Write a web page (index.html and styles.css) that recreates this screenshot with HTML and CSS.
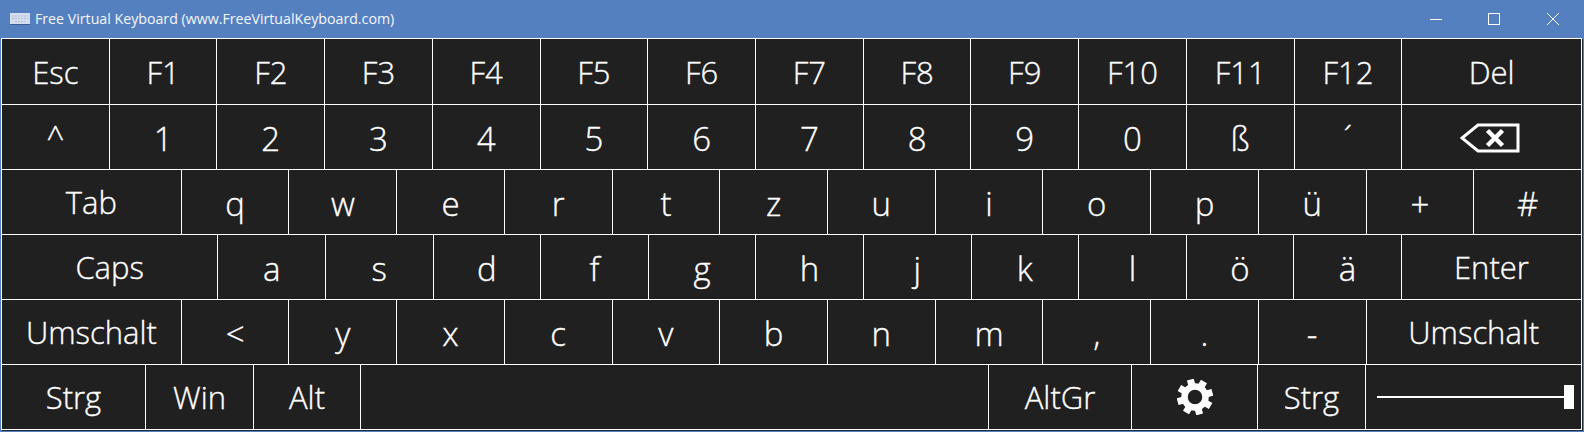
FILE: index.html
```html
<!DOCTYPE html>
<html lang="de">
<head>
<meta charset="utf-8">
<title>Free Virtual Keyboard</title>
<link rel="stylesheet" href="styles.css">
</head>
<body>
<div class="window">
  <header class="titlebar">
    <svg class="app-icon" width="20" height="12" viewBox="0 0 20 12"><rect x="0" y="0" width="20" height="11" fill="#d5deee"/><rect x="0" y="11" width="20" height="1" fill="#3f5f92"/><path d="M2 3h16M2 5.500h16M5 8.500h10" stroke="#aebcd6" stroke-width="1" stroke-dasharray="2 1"/></svg>
    <span class="title">Free Virtual Keyboard (www.FreeVirtualKeyboard.com)</span>
    <div class="controls">
      <div class="ctl"><svg width="14" height="14" viewBox="0 0 14 14"><path d="M1 7.500h12" stroke="#fff" stroke-width="1"/></svg></div>
      <div class="ctl"><svg width="14" height="14" viewBox="0 0 14 14"><rect x="1.500" y="1.500" width="11" height="11" fill="none" stroke="#fff" stroke-width="1"/></svg></div>
      <div class="ctl"><svg width="14" height="14" viewBox="0 0 14 14"><path d="M1 1l12 12M13 1L1 13" stroke="#fff" stroke-width="1"/></svg></div>
    </div>
  </header>
  <main class="keyboard">
    <div class="row r1 fn">
      <div class="key">Esc</div><div class="key">F1</div><div class="key">F2</div><div class="key">F3</div><div class="key">F4</div><div class="key">F5</div><div class="key">F6</div><div class="key">F7</div><div class="key">F8</div><div class="key">F9</div><div class="key">F10</div><div class="key">F11</div><div class="key">F12</div><div class="key">Del</div>
    </div>
    <div class="row r1">
      <div class="key">^</div><div class="key big">1</div><div class="key big">2</div><div class="key big">3</div><div class="key big">4</div><div class="key big">5</div><div class="key big">6</div><div class="key big">7</div><div class="key big">8</div><div class="key big">9</div><div class="key big">0</div><div class="key big">ß</div><div class="key">´</div>
      <div class="key"><svg class="bksp" width="60" height="30" viewBox="0 0 60 30"><path d="M18 2H58V28H18L2 15Z" fill="none" stroke="#fff" stroke-width="3"/><path d="M27.500 7.500L42.500 22.500M42.500 7.500L27.500 22.500" stroke="#fff" stroke-width="4.500"/></svg></div>
    </div>
    <div class="row r3">
      <div class="key">Tab</div><div class="key big">q</div><div class="key big">w</div><div class="key big">e</div><div class="key big">r</div><div class="key big">t</div><div class="key big">z</div><div class="key big">u</div><div class="key big">i</div><div class="key big">o</div><div class="key big">p</div><div class="key big">ü</div><div class="key big">+</div><div class="key big">#</div>
    </div>
    <div class="row r4">
      <div class="key">Caps</div><div class="key big">a</div><div class="key big">s</div><div class="key big">d</div><div class="key big">f</div><div class="key big">g</div><div class="key big">h</div><div class="key big">j</div><div class="key big">k</div><div class="key big">l</div><div class="key big">ö</div><div class="key big">ä</div><div class="key">Enter</div>
    </div>
    <div class="row r5">
      <div class="key">Umschalt</div><div class="key big">&lt;</div><div class="key big">y</div><div class="key big">x</div><div class="key big">c</div><div class="key big">v</div><div class="key big">b</div><div class="key big">n</div><div class="key big">m</div><div class="key big">,</div><div class="key big">.</div><div class="key big">-</div><div class="key">Umschalt</div>
    </div>
    <div class="row r6">
      <div class="key">Strg</div><div class="key">Win</div><div class="key">Alt</div><div class="key"></div><div class="key">AltGr</div>
      <div class="key"><svg width="36" height="36" viewBox="-18 -18 36 36"><circle r="10.500" fill="none" stroke="#fff" stroke-width="6.500"/><g fill="#fff" transform="rotate(-15)"><rect x="-3.500" y="-18" width="7" height="6"/><rect x="-3.500" y="-18" width="7" height="6" transform="rotate(45)"/><rect x="-3.500" y="-18" width="7" height="6" transform="rotate(90)"/><rect x="-3.500" y="-18" width="7" height="6" transform="rotate(135)"/><rect x="-3.500" y="-18" width="7" height="6" transform="rotate(180)"/><rect x="-3.500" y="-18" width="7" height="6" transform="rotate(225)"/><rect x="-3.500" y="-18" width="7" height="6" transform="rotate(270)"/><rect x="-3.500" y="-18" width="7" height="6" transform="rotate(315)"/></g></svg></div>
      <div class="key">Strg</div>
      <div class="key slider"><div class="track"></div><div class="thumb"></div></div>
    </div>
  </main>
</div>
</body>
</html>
```
FILE: styles.css
```css
* { box-sizing: border-box; }
html, body { margin: 0; padding: 0; }
body { width: 1584px; height: 432px; overflow: hidden; background: #5580c0; font-family: "Open Sans", "Noto Sans", sans-serif; }
.window { display: flex; flex-direction: column; height: 432px; }
.titlebar { height: 38px; flex: none; display: flex; align-items: center; padding-left: 10px; background: #5580c0; color: #f4f6fa; }
.app-icon { flex: none; margin-right: 5px; }
.title { font-size: 14.200px; line-height: 38px; }
.controls { margin-left: auto; display: flex; padding-right: 2px; }
.ctl { width: 58.500px; height: 38px; display: flex; align-items: center; justify-content: center; }
.keyboard { margin: 0 2px 2px 1px; display: grid; grid-template-rows: 65px repeat(5, 64px); gap: 1px; padding: 1px; background: #fff; box-shadow: 1px 1px 0 #1f2a3a; }
.row { display: grid; gap: 1px; min-height: 0; }
.r1 { grid-template-columns: repeat(13, 1fr) 1.675fr; }
.r3 { grid-template-columns: 1.675fr repeat(13, 1fr); }
.r4 { grid-template-columns: 2.02fr repeat(11, 1fr) 1.68fr; }
.r5 { grid-template-columns: 1.675fr repeat(11, 1fr) 2.01fr; }
.r6 { grid-template-columns: 143px 107px 106px 627px 142px 125px 107px 1fr; }
.key { display: flex; align-items: center; justify-content: center; background: #202020; color: #fff; font-size: 31px; font-weight: 300; -webkit-text-stroke: 0.35px #fff; line-height: 1; min-width: 0; }
.fn .key { padding-top: 1px; }
.big { font-size: 33px; padding-top: 3px; }
.bksp { margin: 2px 3px 0 0; }
.slider { position: relative; }
.track { position: absolute; left: 11px; right: 17px; top: 31px; height: 2px; background: #fff; }
.thumb { position: absolute; right: 7px; top: 20px; width: 10px; height: 24px; background: #fff; }
```
